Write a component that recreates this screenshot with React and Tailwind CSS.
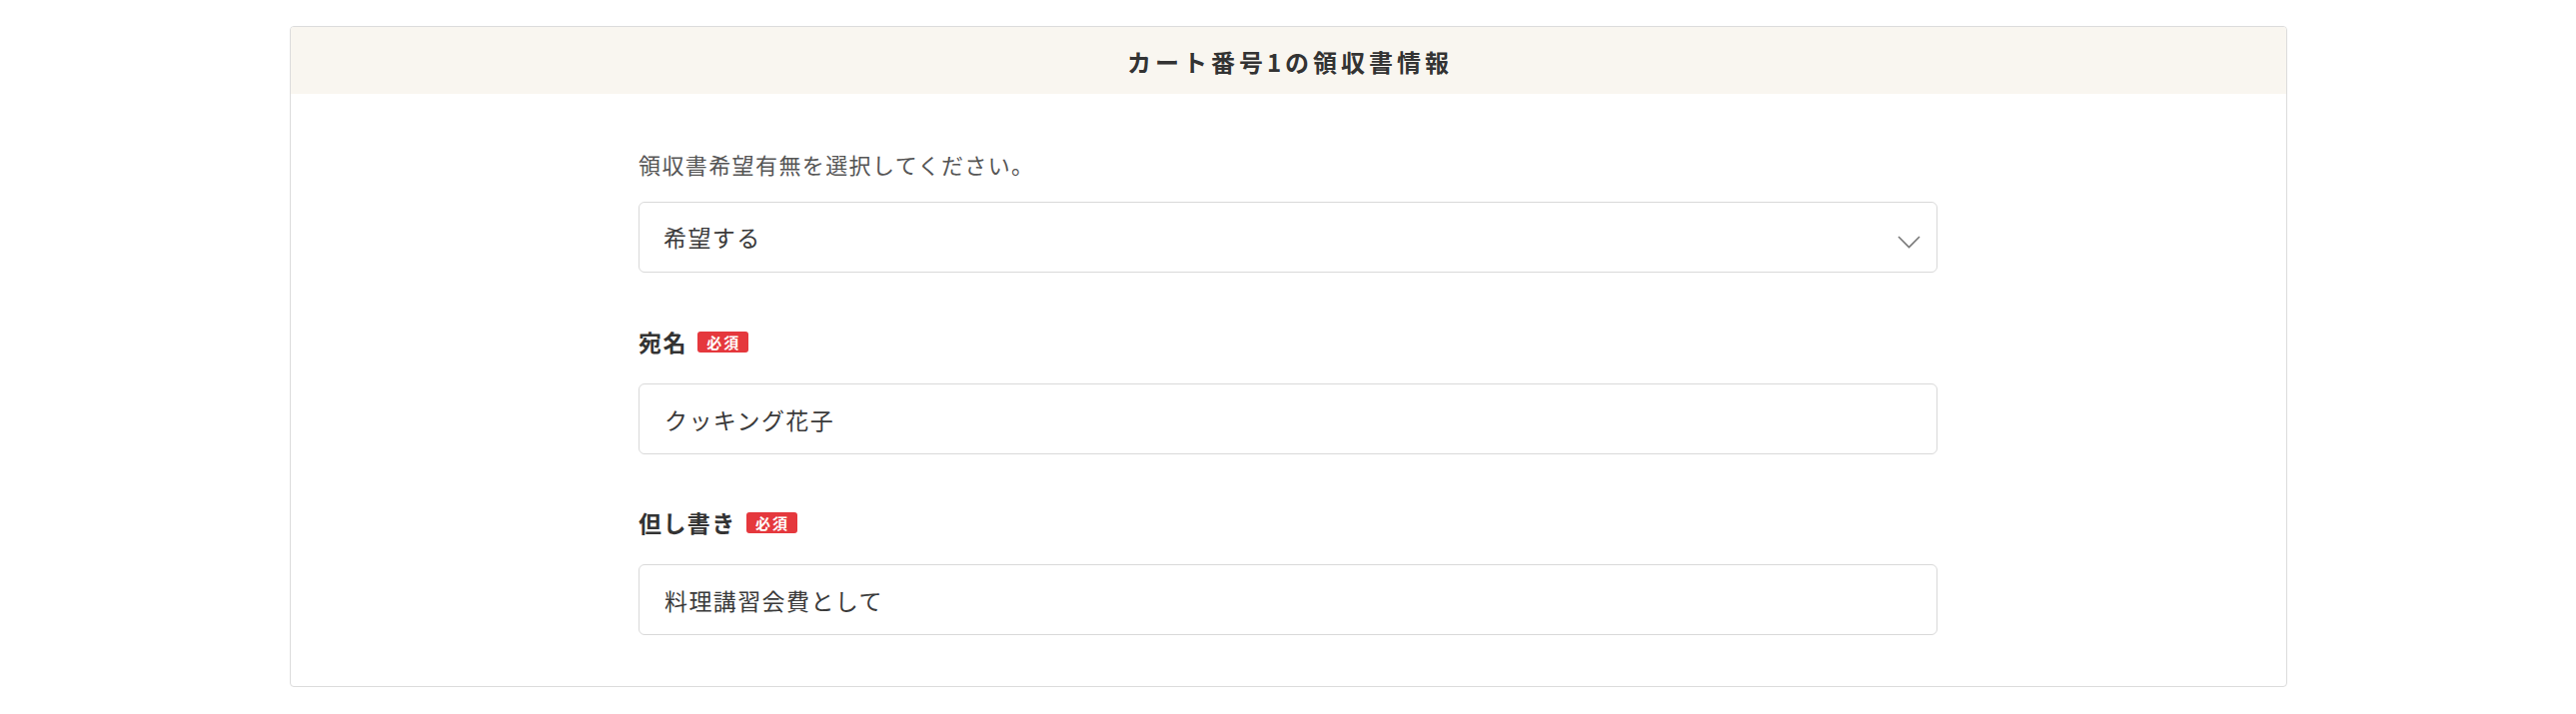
import React from "react";

// Required-field badge shown next to a label
function RequiredBadge() {
  return (
    <span className="ml-[10px] inline-flex h-[21px] w-[51px] items-center justify-center rounded-[3px] bg-[#e5383d] pl-[2px] text-[15px] leading-none font-bold tracking-[2px] text-white">
      必須
    </span>
  );
}

function FieldLabel({ children }) {
  return (
    <div className="mb-[27px] flex h-[30px] items-center">
      <span className="text-[23px] leading-[30px] font-bold tracking-[1.4px] text-[#333]">{children}</span>
      <RequiredBadge />
    </div>
  );
}

function TextField({ value }) {
  return (
    <input
      type="text"
      defaultValue={value}
      className="block h-[71px] w-full rounded-[6px] border border-[#d9d9d9] bg-white pl-[25px] text-[23px] tracking-[1.4px] text-[#3a3a3a] outline-none"
    />
  );
}

export default function App() {
  return (
    <div className="min-h-screen bg-white pt-[26px] font-['Noto_Sans_CJK_JP','Noto_Sans',sans-serif]">
      <section className="mx-auto w-[1999px] overflow-hidden rounded-[4px] border border-[#dcdcdc]">
        {/* Card header */}
        <header className="flex h-[67px] items-center justify-center bg-[#f9f6f0] pt-[3px]">
          <h2 className="pl-[4px] text-[24px] font-bold tracking-[4px] text-[#333]">
            カート番号1の領収書情報
          </h2>
        </header>

        <div className="mx-auto w-[1300px] pt-[55px] pb-[51px]">
          <p className="mb-[23px] text-[22px] leading-[30px] tracking-[1.4px] text-[#555]">
            領収書希望有無を選択してください。
          </p>
          <div className="relative">
            <select
              defaultValue="yes"
              className="block h-[71px] w-full appearance-none rounded-[6px] border border-[#d9d9d9] bg-white pl-[24px] text-[23px] tracking-[1.4px] text-[#3a3a3a] outline-none"
            >
              <option value="yes">希望する</option>
              <option value="no">希望しない</option>
            </select>
            <svg
              className="pointer-events-none absolute top-[34px] right-[17px]"
              width="23"
              height="13"
              viewBox="0 0 23 13"
              fill="none"
            >
              <polyline points="1,1 11.5,11.5 22,1" stroke="#777" strokeWidth="1.6" />
            </svg>
          </div>

          <div className="mt-[54px]">
            <FieldLabel>宛名</FieldLabel>
            <TextField value="クッキング花子" />
          </div>

          <div className="mt-[53px]">
            <FieldLabel>但し書き</FieldLabel>
            <TextField value="料理講習会費として" />
          </div>
        </div>
      </section>
    </div>
  );
}
